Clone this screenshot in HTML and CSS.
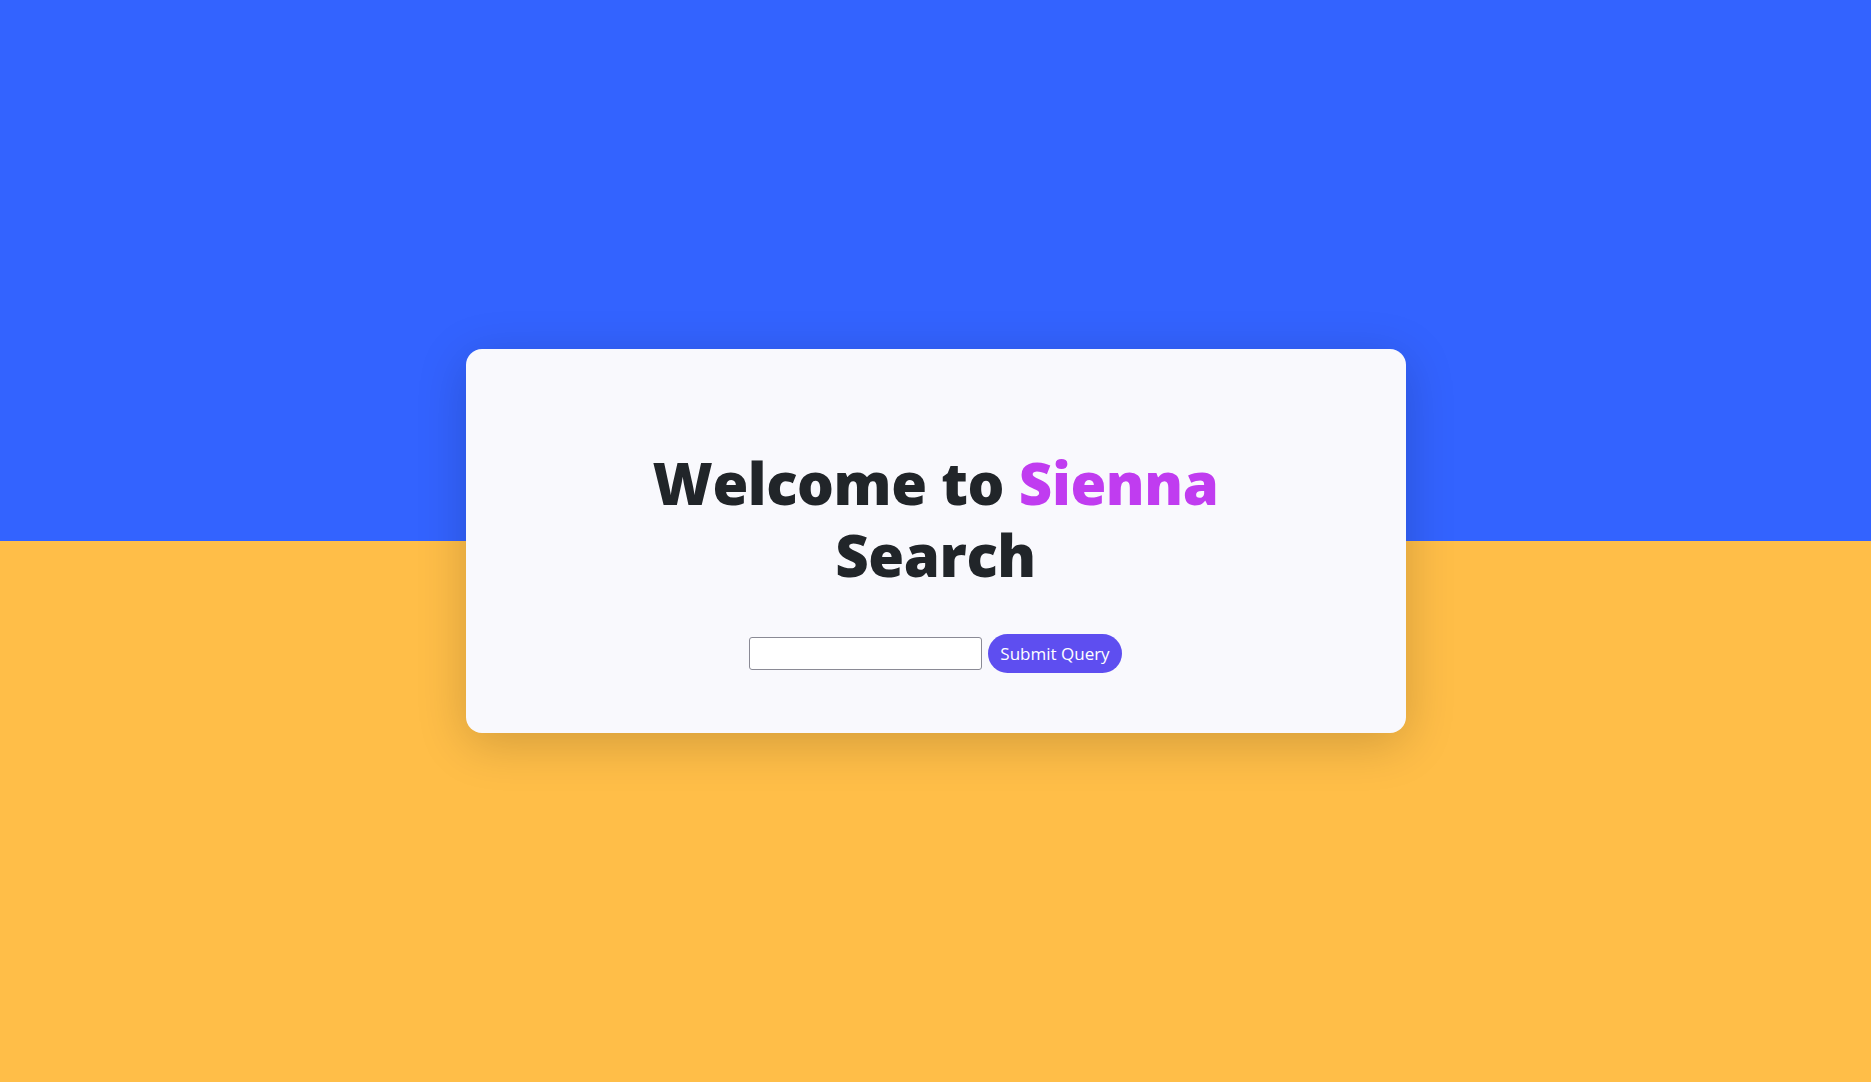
FILE: index.html
```html
<!DOCTYPE html>
<html lang="en">
<head>
<meta charset="utf-8">
<title>Sienna Search</title>
<link rel="stylesheet" href="styles.css">
</head>
<body>
<div class="bg">
  <div class="bg-top"></div>
  <div class="bg-bottom"></div>
</div>
<main class="stage">
  <section class="card">
    <h1 class="title">Welcome to <span class="brand">Sienna</span><br>Search</h1>
    <form class="search" onsubmit="return false">
      <input class="search-input" type="text" name="q">
      <button class="search-btn" type="submit">Submit Query</button>
    </form>
  </section>
</main>
</body>
</html>
```
FILE: styles.css
```css
* { box-sizing: border-box; }
html, body { margin: 0; padding: 0; height: 100%; }
body {
  font-family: "Open Sans", "Noto Sans", sans-serif;
  overflow: hidden;
}
.bg {
  position: fixed;
  inset: 0;
  display: flex;
  flex-direction: column;
  z-index: 0;
}
.bg-top { flex: 1; background: #3363ff; }
.bg-bottom { flex: 1; background: #ffbe48; }
.stage {
  position: relative;
  z-index: 1;
  height: 100vh;
  display: flex;
  align-items: center;
  justify-content: center;
}
.card {
  width: 940px;
  height: 384px;
  background: #f9f9fd;
  border-radius: 16px;
  box-shadow: 0 10px 50px rgba(0, 0, 0, 0.18);
  display: flex;
  flex-direction: column;
  align-items: center;
  padding-top: 98px;
}
.title {
  margin: 0 0 43px;
  font-size: 58px;
  line-height: 72px;
  font-weight: 800;
  color: #212529;
  text-align: center;
  letter-spacing: -0.4px;
}
.brand { color: #c03cf0; }
.search {
  display: flex;
  align-items: center;
  gap: 6px;
}
.search-input {
  width: 233px;
  height: 33px;
  border: 1px solid #8a8a95;
  border-radius: 3px;
  background: #fff;
  font-size: 16px;
  font-family: inherit;
  padding: 2px 6px;
}
.search-btn {
  height: 39px;
  padding: 0 12px;
  border: none;
  border-radius: 20px;
  background: #5e4ef0;
  color: #fff;
  font-family: "Open Sans", sans-serif;
  font-size: 17px;
  cursor: pointer;
}
```
